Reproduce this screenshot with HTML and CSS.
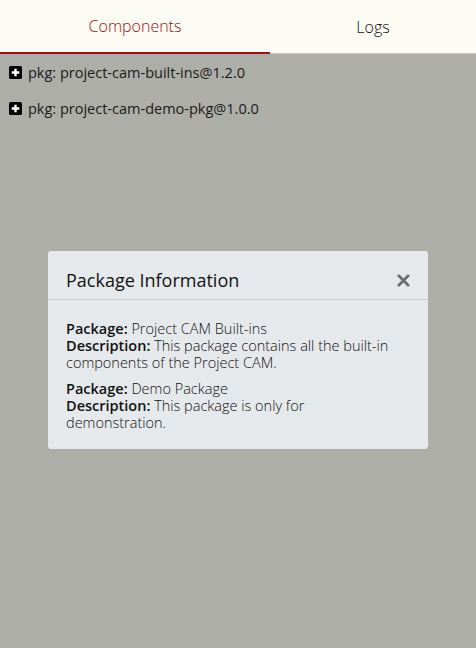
FILE: index.html
```html
<!DOCTYPE html>
<html>
<head>
<meta charset="utf-8">
<link rel="stylesheet" href="styles.css">
</head>
<body>
<header class="tabs">
  <div class="tab active">Components</div>
  <div class="tab">Logs</div>
</header>
<main class="list">
  <div class="item"><span class="plus"><svg viewBox="0 0 12 12" width="13" height="13"><rect x="0" y="0" width="12" height="12" rx="1.5" fill="#000"/><path d="M6 2.5v7M2.5 6h7" stroke="#fff" stroke-width="2.2"/></svg></span>pkg: project-cam-built-ins@1.2.0</div>
  <div class="item"><span class="plus"><svg viewBox="0 0 12 12" width="13" height="13"><rect x="0" y="0" width="12" height="12" rx="1.5" fill="#000"/><path d="M6 2.5v7M2.5 6h7" stroke="#fff" stroke-width="2.2"/></svg></span>pkg: project-cam-demo-pkg@1.0.0</div>
</main>
<div class="modal">
  <div class="modal-head">
    <h2 class="modal-title">Package Information</h2>
    <span class="close"><svg viewBox="0 0 14 14" width="13" height="13"><path d="M2 2L12 12M12 2L2 12" stroke="#6b6e70" stroke-width="3" stroke-linecap="round"/></svg></span>
  </div>
  <div class="modal-body">
    <p class="info"><b>Package:</b> Project CAM Built-ins<br><b>Description:</b> This package contains all the built-in components of the Project CAM.</p>
    <p class="info"><b>Package:</b> Demo Package<br><b>Description:</b> This package is only for demonstration.</p>
  </div>
</div>
</body>
</html>
```
FILE: styles.css
```css
html, body {
  margin: 0;
  padding: 0;
}
body {
  width: 476px;
  height: 648px;
  background: #aeaea8;
  font-family: "Open Sans", "Noto Sans", sans-serif;
  color: #111;
  position: relative;
  overflow: hidden;
}
.tabs {
  display: grid;
  grid-template-columns: 270px 1fr;
  height: 54px;
  background: #fcfcf4;
}
.tab {
  display: flex;
  align-items: center;
  justify-content: center;
  font-size: 16px;
  font-weight: 300;
  color: #111;
  border-bottom: 1px solid #c8c8c2;
  box-sizing: border-box;
}
.tab.active {
  color: #a50d12;
  border-bottom: 2px solid #a50d12;
}
.list {
  padding: 0 0 0 9px;
}
.item {
  display: flex;
  align-items: center;
  height: 36px;
  font-size: 14.5px;
  color: #1a1a1a;
}
.plus {
  display: flex;
  margin-right: 6px;
}
.modal {
  position: absolute;
  top: 251px;
  left: 48px;
  width: 380px;
  height: 198px;
  background: #e6e9ec;
  border-radius: 3px;
  box-sizing: border-box;
}
.modal-head {
  display: flex;
  align-items: center;
  justify-content: space-between;
  height: 49px;
  padding: 10px 18px 0 18px;
  box-sizing: border-box;
  border-bottom: 1px solid #c9cbcd;
}
.modal-title {
  margin: 0;
  font-size: 18px;
  font-weight: 400;
  color: #111;
}
.close {
  display: flex;
}
.modal-body {
  padding: 20px 24px 0 18px;
}
.info {
  margin: 0 0 9px 0;
  font-size: 14.5px;
  line-height: 17px;
  font-weight: 300;
  color: #111;
}
.info b {
  font-weight: 600;
}
```
